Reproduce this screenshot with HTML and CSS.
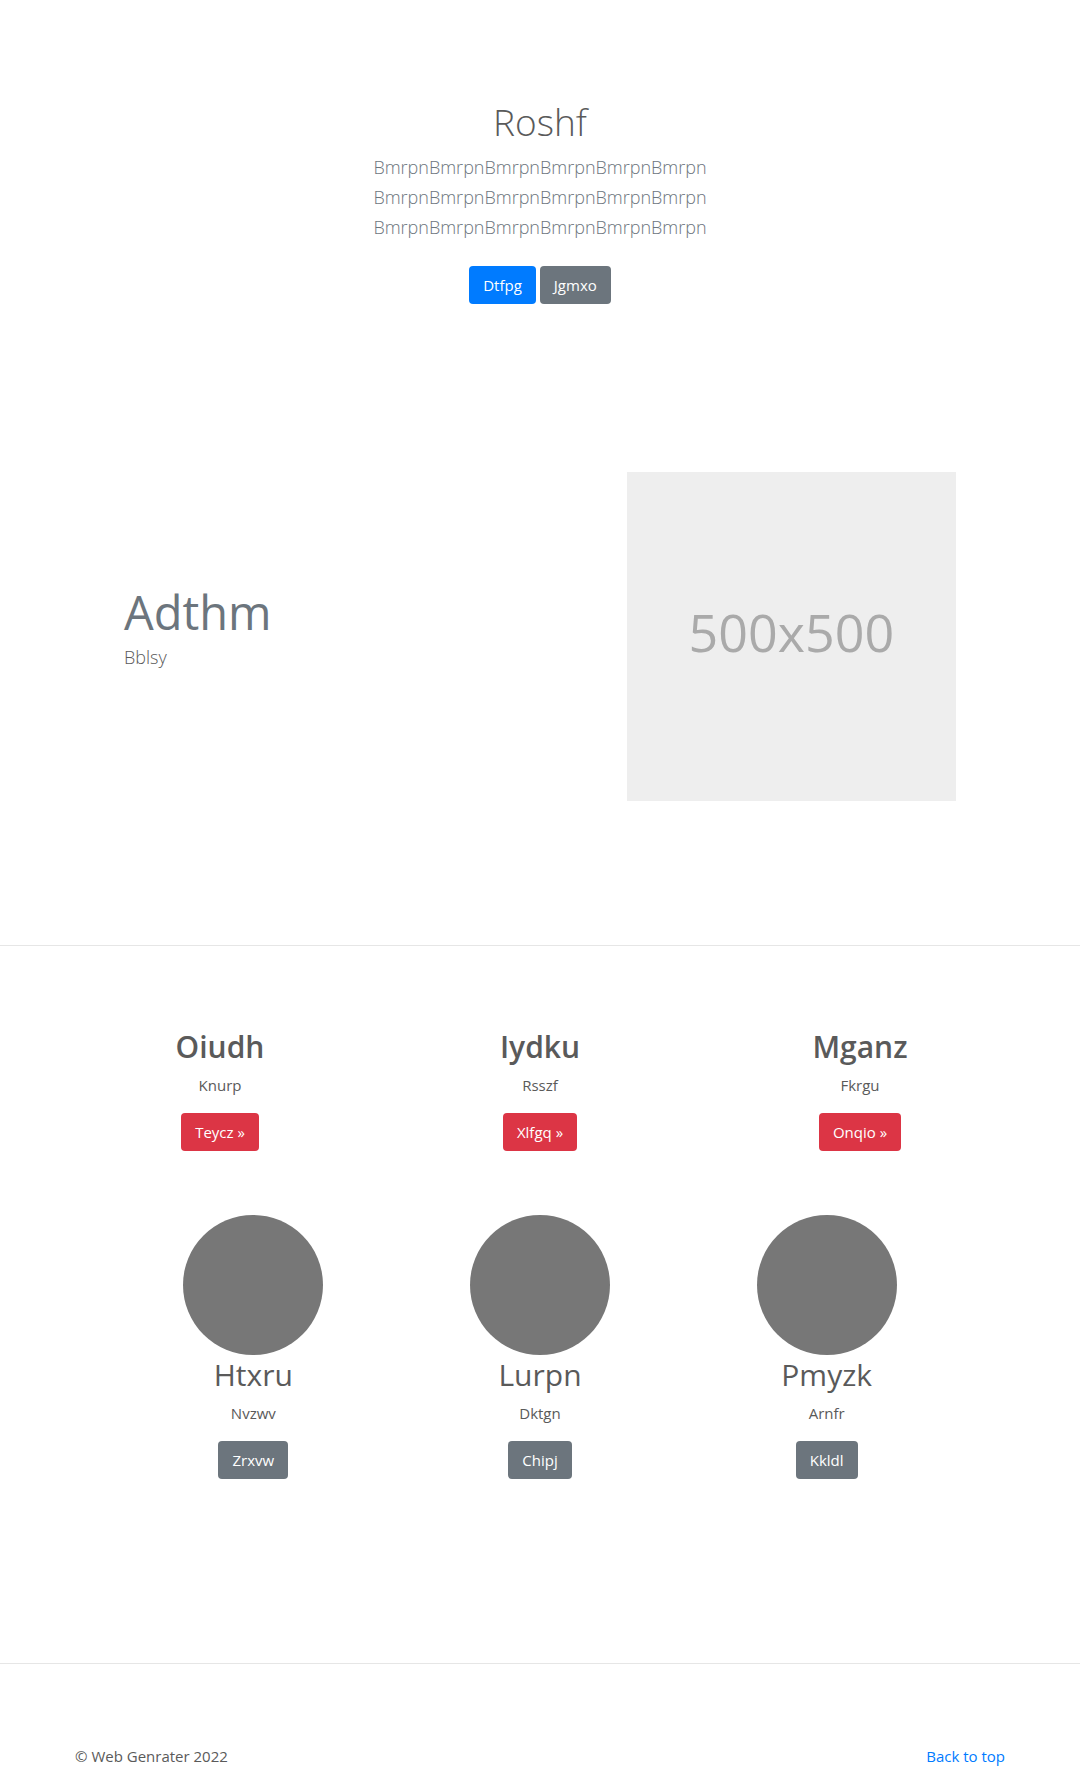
FILE: index.html
```html
<!DOCTYPE html>
<html lang="en">
<head>
<meta charset="utf-8">
<meta name="viewport" content="width=device-width, initial-scale=1">
<title>Roshf</title>
<link rel="stylesheet" href="styles.css">
</head>
<body id="top">
<main>
  <section class="hero">
    <h1 class="hero-title">Roshf</h1>
    <p class="lead muted">BmrpnBmrpnBmrpnBmrpnBmrpnBmrpn<br>BmrpnBmrpnBmrpnBmrpnBmrpnBmrpn<br>BmrpnBmrpnBmrpnBmrpnBmrpnBmrpn</p>
    <div class="actions">
      <button type="button" class="btn btn-primary">Dtfpg</button>
      <button type="button" class="btn btn-secondary">Jgmxo</button>
    </div>
  </section>

  <section class="feature">
    <div class="feature-text">
      <h2 class="feature-title">Adthm</h2>
      <p class="lead">Bblsy</p>
    </div>
    <div class="feature-media">
      <div class="placeholder">500x500</div>
    </div>
  </section>

  <hr class="divider">

  <section class="columns">
    <div class="column">
      <h2 class="heading heading-bold">Oiudh</h2>
      <p class="text">Knurp</p>
      <button type="button" class="btn btn-danger">Teycz »</button>
    </div>
    <div class="column">
      <h2 class="heading heading-bold">Iydku</h2>
      <p class="text">Rsszf</p>
      <button type="button" class="btn btn-danger">Xlfgq »</button>
    </div>
    <div class="column">
      <h2 class="heading heading-bold">Mganz</h2>
      <p class="text">Fkrgu</p>
      <button type="button" class="btn btn-danger">Onqio »</button>
    </div>
  </section>

  <section class="columns profiles">
    <div class="column">
      <div class="avatar"></div>
      <h2 class="heading">Htxru</h2>
      <p class="text">Nvzwv</p>
      <button type="button" class="btn btn-secondary">Zrxvw</button>
    </div>
    <div class="column">
      <div class="avatar"></div>
      <h2 class="heading">Lurpn</h2>
      <p class="text">Dktgn</p>
      <button type="button" class="btn btn-secondary">Chipj</button>
    </div>
    <div class="column">
      <div class="avatar"></div>
      <h2 class="heading">Pmyzk</h2>
      <p class="text">Arnfr</p>
      <button type="button" class="btn btn-secondary">Kkldl</button>
    </div>
  </section>

  <hr class="divider">
</main>
<footer class="footer">
  <span>© Web Genrater 2022</span>
  <a href="#top">Back to top</a>
</footer>
</body>
</html>
```
FILE: styles.css
```css
*, *::before, *::after {
  box-sizing: border-box;
}

body {
  margin: 0;
  background: #fff;
  color: #5a5a5a;
  font-family: "Segoe UI", "Open Sans", "Noto Sans", sans-serif;
  font-size: 15px;
  line-height: 24px;
}

h1, h2, p {
  margin: 0;
}

.hero {
  padding: 96px 16px 168px;
  text-align: center;
}

.hero-title {
  margin-bottom: 4px;
  font-size: 37px;
  font-weight: 300;
  line-height: 52px;
}

.lead {
  font-size: 18px;
  font-weight: 300;
  line-height: 30px;
}

.muted {
  color: #6c757d;
}

.actions {
  display: flex;
  justify-content: center;
  gap: 4px;
  margin-top: 24px;
}

.btn {
  padding: 6px 13px;
  border: 1px solid transparent;
  border-radius: 4px;
  color: #fff;
  font: inherit;
  cursor: pointer;
}

.btn-primary {
  background: #007bff;
}

.btn-secondary {
  background: #6c757d;
}

.btn-danger {
  background: #dc3545;
}

.feature {
  display: grid;
  grid-template-columns: 7fr 5fr;
  align-items: center;
  padding: 0 109px 144px;
}

.feature-text {
  padding: 0 15px 20px;
}

.feature-title {
  color: #6c757d;
  font-size: 47px;
  font-weight: 400;
  line-height: 60px;
}

.feature-media {
  padding: 0 15px;
}

.placeholder {
  display: grid;
  place-items: center;
  max-width: 500px;
  padding-bottom: 10px;
  aspect-ratio: 1;
  background: #eee;
  color: #aaa;
  font-size: 52px;
}

.divider {
  margin: 0;
  border: 0;
  border-top: 1px solid #e6e6e6;
}

.columns {
  display: grid;
  grid-template-columns: repeat(3, 1fr);
  padding: 81px 60px 64px;
  text-align: center;
}

.profiles {
  padding: 0 110px 184px;
}

.avatar {
  width: 140px;
  height: 140px;
  margin: 0 auto;
  border-radius: 50%;
  background: #777;
}

.heading {
  margin-bottom: 6px;
  font-size: 30px;
  font-weight: 400;
  line-height: 40px;
}

.heading-bold {
  font-weight: 600;
}

.text {
  margin-bottom: 16px;
}

.footer {
  display: flex;
  justify-content: space-between;
  padding: 80px 75px 0;
}

.footer a {
  color: #007bff;
  text-decoration: none;
}
```
